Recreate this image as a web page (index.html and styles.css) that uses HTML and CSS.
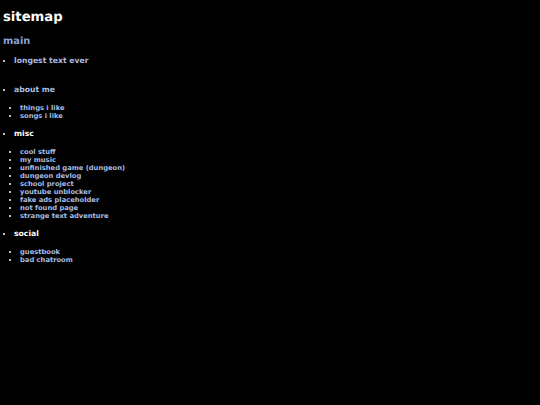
FILE: index.html
```html
<!DOCTYPE html>
<html lang="en">
<head>
<meta charset="utf-8">
<title>sitemap</title>
<link rel="stylesheet" href="styles.css">
</head>
<body>
<h1 class="title">sitemap</h1>
<h2 class="section"><a href="#">main</a></h2>
<ul class="tree">
  <li class="node node-spaced"><h3 class="label"><a href="#">longest text ever</a></h3></li>
  <li class="node">
    <h3 class="label"><a href="#">about me</a></h3>
    <ul class="sub">
      <li><a href="#">things i like</a></li>
      <li><a href="#">songs i like</a></li>
    </ul>
  </li>
  <li class="node">
    <h3 class="label">misc</h3>
    <ul class="sub">
      <li><a href="#">cool stuff</a></li>
      <li><a href="#">my music</a></li>
      <li><a href="#">unfinished game (dungeon)</a></li>
      <li><a href="#">dungeon devlog</a></li>
      <li><a href="#">school project</a></li>
      <li><a href="#">youtube unblocker</a></li>
      <li><a href="#">fake ads placeholder</a></li>
      <li><a href="#">not found page</a></li>
      <li><a href="#">strange text adventure</a></li>
    </ul>
  </li>
  <li class="node">
    <h3 class="label">social</h3>
    <ul class="sub">
      <li><a href="#">guestbook</a></li>
      <li><a href="#">bad chatroom</a></li>
    </ul>
  </li>
</ul>
</body>
</html>
```
FILE: styles.css
```css
html, body {
  background: #000;
}
body {
  margin: 0;
  padding: 3px;
  color: #fff;
  font-family: "DejaVu Sans", Verdana, sans-serif;
  font-weight: bold;
  font-size: 6.75px;
  text-rendering: geometricPrecision;
}
a {
  color: #a9bce0;
  text-decoration: none;
}
.title {
  margin: 7px 0 0;
  font-size: 13.2px;
  line-height: 15px;
}
.section {
  margin: 10.7px 0 0;
  font-size: 9.9px;
  line-height: 12px;
}
.section a {
  color: #8a9fd2;
}
.tree {
  margin: 7.9px 0 0;
  padding: 0 0 0 11px;
  list-style: disc;
}
.node + .node {
  margin-top: 8.9px;
}
.node-spaced {
  padding-bottom: 11.5px;
}
.label {
  margin: 0;
  font-size: 7.7px;
  line-height: 9px;
}
.sub {
  margin: 10px 0 0;
  padding: 0 0 0 6px;
  list-style: disc;
}
.sub li {
  line-height: 8px;
}
```
